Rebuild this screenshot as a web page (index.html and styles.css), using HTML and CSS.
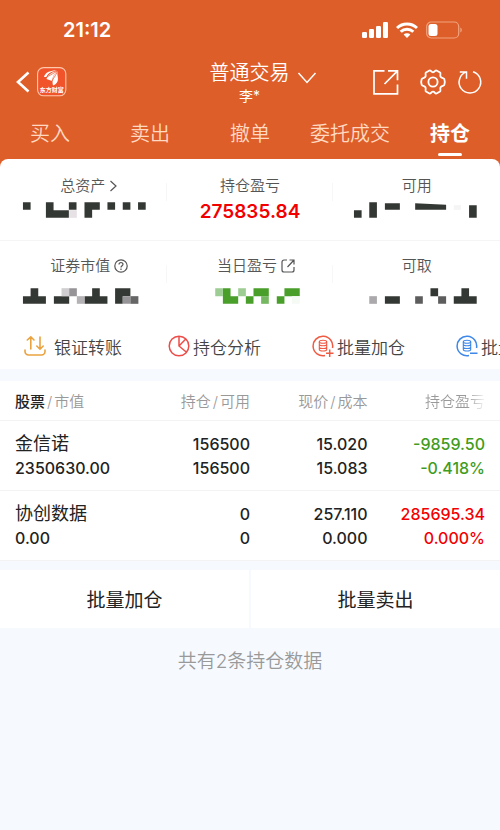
FILE: index.html
```html
<!DOCTYPE html>
<html lang="zh-CN">
<head>
<meta charset="utf-8">
<meta name="viewport" content="width=device-width, initial-scale=1">
<title>普通交易</title>
<link rel="stylesheet" href="styles.css">
</head>
<body>
<header class="top">
  <div class="status">
    <time class="clock">21:12</time>
    <div class="status-icons">
      <svg width="26" height="16" viewBox="0 0 26 16" fill="#fff" aria-hidden="true"><rect y="10" width="5" height="6" rx="1.2"/><rect x="7" y="7" width="5" height="9" rx="1.2"/><rect x="14" y="4" width="5" height="12" rx="1.2"/><rect x="21" y="0" width="5" height="16" rx="1.2"/></svg>
      <svg width="22" height="16" viewBox="0 0 22 16" fill="none" stroke="#fff" stroke-width="3" aria-hidden="true"><path d="M1 6a14.300 14.300 0 0 1 20 0"/><path d="M4.700 9.800a9 9 0 0 1 12.600 0"/><path d="M11 16 7.600 12.600a4.900 4.900 0 0 1 6.800 0z" fill="#fff" stroke="none"/></svg>
      <svg width="36" height="18" viewBox="0 0 36 18" fill="none" aria-hidden="true"><rect x=".7" y="1" width="32" height="16" rx="4.500" stroke="#f0a47f" stroke-width="1.200"/><rect x="2.500" y="3" width="9" height="12" rx="2.500" fill="#fff"/><path d="M34.300 6.500c2 .8 2 4.200 0 5z" fill="#f0a47f"/></svg>
    </div>
  </div>
  <div class="nav">
    <div class="nav-left">
      <button class="icon-btn" aria-label="返回"><svg width="14" height="22" viewBox="0 0 14 22" fill="none" stroke="#fff" stroke-width="2.600"><path d="M12.500 1.500 2 11l10.500 9.500"/></svg></button>
      <svg class="logo" width="30" height="30" viewBox="0 0 30 30" role="img" aria-label="东方财富"><rect x=".6" y=".6" width="28.200" height="28.200" rx="6" fill="#f1532b" stroke="#ffc9ad" stroke-width="1.100"/><path d="M7 10C8 5 14 3 20.500 3.500 15 4 11 6 9.500 10z M9.500 12C11 7.500 15 4.800 20.600 4.200 17.500 6.500 15.500 9.500 15 14z M16 18.500C14.500 12 17 7 20.800 4.500 19.500 8 22 11 20.500 14.500 19.500 17 17.500 18 16 18.500z" fill="#fff"/><path d="M9 10.500 20 4.300M15 14 20.700 4.500" stroke="#f1532b" stroke-width=".7"/><text x="14.700" y="25.200" text-anchor="middle" class="logo-text">东方财富</text></svg>
    </div>
    <button class="account">
      <span class="account-text"><span class="account-title">普通交易</span><span class="account-name">李*</span></span>
      <svg class="account-arrow" width="20" height="14" viewBox="0 0 20 14" fill="none" stroke="#fff" stroke-width="1.500"><path d="M1.500 2 10 11.500 18.500 2"/></svg>
    </button>
    <div class="nav-right">
      <button class="icon-btn" aria-label="分享"><svg width="28" height="28" viewBox="0 0 28 28" fill="none" stroke="#fff" stroke-width="1.700"><path d="M12.500 2.800H2v23h23.500V16.500M16 2.800h9.500v9.500M25.500 2.800 12.500 16"/></svg></button>
      <button class="icon-btn" aria-label="设置"><svg width="28" height="28" viewBox="0 0 28 28" fill="none" stroke="#fff" stroke-width="1.800" stroke-linejoin="round"><path d="M10.500 2.500C12 2 12 4.300 14 4.300S16 2 17.500 2.500L21 4.500C22.300 5.500 20.600 7 21.600 8.800S25 9.800 25.300 11.200C26 13 26 15 25.300 16.800 25 18.200 22.600 17.400 21.600 19.200S22.300 22.500 21 23.500L17.500 25.500C16 26 16 23.700 14 23.700S12 26 10.500 25.500L7 23.500C5.700 22.500 7.400 21 6.400 19.200S3 18.200 2.700 16.800C2 15 2 13 2.700 11.200 3 9.800 5.400 10.600 6.400 8.800S5.700 5.500 7 4.500Z"/><circle cx="14" cy="14" r="4.600"/></svg></button>
      <button class="icon-btn" aria-label="刷新"><svg width="26" height="26" viewBox="0 0 26 26" fill="none" stroke="#fff" stroke-width="1.500"><path d="M16 2.800A10.800 10.800 0 1 1 9.500 2.900M2.800 2.900h6.700v6.900"/></svg></button>
    </div>
  </div>
  <nav class="tabs">
    <a href="#buy">买入</a><a href="#sell">卖出</a><a href="#cancel">撤单</a><a href="#orders">委托成交</a><a class="active" href="#hold" aria-current="page">持仓</a>
  </nav>
</header>
<main>
  <section class="summary">
    <div class="cell">
      <div class="label with-icon">总资产<svg width="9" height="14" viewBox="0 0 9 14" fill="none" stroke="#555" stroke-width="1.200"><path d="M1.500 2 7 7 1.500 12"/></svg></div>
      <svg class="mosaic" viewBox="0 0 501 47" fill="#343834" aria-hidden="true"><path d="M69 0h23v23H69zM138 0h23v24h46V0h23v23h-23v24h-69zM254 0h46v23h-23v24h-23zM323 0h23v23h-23zM369 0h23v23h-23zM415 0h23v23h-23z"/><path d="M208 24h23v23h-23z" fill="#e6e1e5"/></svg>
    </div>
    <div class="cell">
      <div class="label">持仓盈亏</div>
      <div class="total">275835.84</div>
    </div>
    <div class="cell">
      <div class="label">可用</div>
      <svg class="mosaic" viewBox="0 0 501 47" fill="#343834" aria-hidden="true"><path d="M63 24h23v23H63zM109 0h23v47h-23zM156 3h45v20h-45zM247 3l93 5v15h-93zM409 9h23v38h-23z"/><path d="M363 9h22v14h-22z" fill="#f5f5f5"/></svg>
    </div>
    <div class="cell">
      <div class="label with-icon">证券市值<svg width="14" height="14" viewBox="0 0 14 14" fill="none" stroke="#555" stroke-width="1.200"><circle cx="7" cy="7" r="6.200"/><path d="M5 5.600C5 2.800 9 2.900 9 5.300 9 6.800 7 6.700 7 8.500M7 9.600v1.300"/></svg></div>
      <svg class="mosaic" viewBox="0 0 501 47" fill="#343834" aria-hidden="true"><path d="M92 0h23v24h23v23H69V24h23zM162 24h46v23h-46zM277 0h23v24h23v23h-69V24h23zM346 0h46v24h-23v23h-23z"/><path d="M185 0h23v24h-23z" fill="#d0ced0"/><path d="M208 0h23v24h-23zM369 24h23v23h-23z" fill="#969496"/><path d="M231 24h23v23h-23z" fill="#b5b2b5"/><path d="M392 24h24v23h-24z" fill="#666"/></svg>
    </div>
    <div class="cell">
      <div class="label with-icon">当日盈亏<svg width="14" height="14" viewBox="0 0 14 14" fill="none" stroke="#555" stroke-width="1.200"><path d="M6 1H3a2 2 0 0 0-2 2v8a2 2 0 0 0 2 2h8a2 2 0 0 0 2-2V8M8.500 1H13v4.500M13 1 6.500 8"/></svg></div>
      <svg class="mosaic" viewBox="0 0 501 47" fill="#499f2a" aria-hidden="true"><path d="M168 0h23v24h23v23h-46zM260 0h46v24h-46v23h-23V24h23zM353 0h46v24h-46v23h-23V24h23z"/><path d="M145 0h23v24h-23zM214 0h23v24h-23z" fill="#9dcd92"/><path d="M283 24h23v23h-23z" fill="#76b762"/><path d="M376 24h23v23h-23z" fill="#f5faf5"/></svg>
    </div>
    <div class="cell">
      <div class="label">可取</div>
      <svg class="mosaic" viewBox="0 0 501 47" fill="#343834" aria-hidden="true"><path d="M156 24h45v23h-45zM293 0h23v24h-23zM386 0h23v24h23v23h-69V24h23z"/><path d="M109 24h23v23h-23z" fill="#aba9ab"/><path d="M247 24h23v23h-23zM316 24h24v23h-24z" fill="#5c5d5c"/></svg>
    </div>
  </section>
  <section class="tools">
    <button class="tool wide"><svg width="22" height="22" viewBox="0 0 22 22" fill="none" stroke="#eaa23f" stroke-width="1.600" stroke-linecap="round"><path d="M1 15v1.500a3.500 3.500 0 0 0 3.500 3.500h13a3.500 3.500 0 0 0 3.500-3.500V15M6.800 14V2M3.300 5 6.800 1.800 10 5M16 2v12M12.800 11l3.200 3.200 3.200-3.200"/></svg>银证转账</button>
    <button class="tool"><svg width="22" height="22" viewBox="0 0 22 22" fill="none" stroke="#ed4c48" stroke-width="1.500"><circle cx="11" cy="11" r="9.800"/><path d="M11 1.200V11l7.500 6.300M11 11l6.800-7"/></svg>持仓分析</button>
    <button class="tool"><svg width="22" height="22" viewBox="0 0 22 22" fill="none" stroke="#ef5a43" stroke-width="1.500"><path d="M20.500 13A9.800 9.800 0 1 0 13 20.600M14 18.200h7.500M17.700 14.400v7.500"/><g stroke-width="1.100"><ellipse cx="11" cy="6.700" rx="3.700" ry="1.500"/><path d="M7.300 6.700v7.800c0 2 7.400 2 7.400 0V6.700M7.300 9.300c0 2 7.400 2 7.400 0M7.300 12c0 2 7.400 2 7.400 0"/></g></svg>批量加仓</button>
    <button class="tool"><svg width="22" height="22" viewBox="0 0 22 22" fill="none" stroke="#3d88e8" stroke-width="1.500"><path d="M20.500 13A9.800 9.800 0 1 0 13 20.600M14 18.200h7.500"/><g stroke-width="1.100"><ellipse cx="11" cy="6.700" rx="3.700" ry="1.500"/><path d="M7.300 6.700v7.800c0 2 7.400 2 7.400 0V6.700M7.300 9.300c0 2 7.400 2 7.400 0M7.300 12c0 2 7.400 2 7.400 0"/></g></svg>批量卖出</button>
  </section>
  <table class="holdings">
    <colgroup><col class="col-name"><col class="col-qty"><col class="col-price"><col></colgroup>
    <thead>
      <tr><th><b>股票</b><i>/</i>市值</th><th>持仓<i>/</i>可用</th><th>现价<i>/</i>成本</th><th class="fade">持仓盈亏</th></tr>
    </thead>
    <tbody>
      <tr><td><span class="name">金信诺</span>2350630.00</td><td>156500<br>156500</td><td>15.020<br>15.083</td><td class="down">-9859.50<br>-0.418%</td></tr>
      <tr><td><span class="name">协创数据</span>0.00</td><td>0<br>0</td><td>257.110<br>0.000</td><td class="up">285695.34<br>0.000%</td></tr>
    </tbody>
  </table>
  <div class="batch"><button>批量加仓</button><button>批量卖出</button></div>
  <p class="count">共有2条持仓数据</p>
</main>
</body>
</html>
```
FILE: styles.css
```css
* { box-sizing: border-box; }
body {
  margin: 0;
  background: #f6faff;
  color: #222;
  font-family: Inter, "Noto Sans CJK SC", sans-serif;
  overflow-x: hidden;
}
button {
  margin: 0;
  padding: 0;
  border: 0;
  background: none;
  color: inherit;
  font: inherit;
}
svg { display: block; flex: none; }

.top {
  background: #de5e29;
  color: #fff;
  padding-bottom: 12px;
}
.status {
  display: flex;
  justify-content: space-between;
  align-items: center;
  height: 60px;
  padding: 0 38px 0 63px;
}
.clock { font-size: 20px; font-weight: 600; }
.status-icons { display: flex; align-items: center; gap: 8px; }
.nav {
  display: grid;
  grid-template-columns: 1fr auto 1fr;
  align-items: center;
  height: 48px;
  padding: 0 17px 0 16px;
}
.nav-left { display: flex; align-items: center; gap: 7px; padding-bottom: 6px; }
.logo-text { font-family: "Noto Sans CJK SC", sans-serif; font-size: 6px; font-weight: 700; fill: #fff; }
.account { display: flex; align-items: flex-start; gap: 7px; padding: 0 0 4px 27px; }
.account-text { display: flex; flex-direction: column; align-items: center; }
.account-title { font-size: 20px; line-height: 26px; font-weight: 350; }
.account-name { font-size: 14px; line-height: 20px; }
.account-arrow { margin-top: 11px; }
.nav-right { display: flex; justify-content: flex-end; align-items: center; padding-bottom: 6px; }
.nav-right .icon-btn:first-child { margin-right: 19px; }
.nav-right .icon-btn:last-child { margin-left: 10px; }

.tabs {
  display: grid;
  grid-template-columns: repeat(5, 1fr);
  height: 51px;
}
.tabs a {
  display: flex;
  flex-direction: column;
  align-items: center;
  color: #ffd9c2;
  font-size: 20px;
  line-height: 52px;
  font-weight: 350;
  text-decoration: none;
}
.tabs .active { color: #fff; font-weight: 700; }
.tabs .active::after {
  content: "";
  flex: none;
  width: 24px;
  height: 3px;
  margin-top: -7px;
  border-radius: 2px;
  background: #fff;
}

.summary {
  display: grid;
  grid-template-columns: repeat(3, 1fr);
  margin-top: -12px;
  border-radius: 8px 8px 0 0;
  background: #fff;
}
.cell {
  position: relative;
  display: flex;
  flex-direction: column;
  align-items: center;
  gap: 11px;
  height: 82px;
  padding-top: 14px;
}
.cell:nth-child(-n+3) {
  gap: 5px;
  padding-top: 16px;
  border-bottom: 1px solid #f5f5f5;
}
.cell:not(:nth-child(3n))::after {
  content: "";
  position: absolute;
  top: 24px;
  right: 0;
  width: 1px;
  height: 18px;
  background: #f7f7f7;
}
.label {
  display: flex;
  align-items: center;
  gap: 4px;
  color: #555;
  font-size: 15px;
  line-height: 22px;
  font-weight: 350;
}
.with-icon { padding-left: 12px; }
.mosaic { width: 100%; height: 16px; }
.total { color: #f20000; font-size: 19px; line-height: 20px; font-weight: 600; }

.tools {
  display: flex;
  padding-left: 24px;
  overflow: hidden;
  background: #fff;
}
.tool {
  display: flex;
  flex: 0 0 144px;
  align-items: center;
  gap: 3px;
  height: 46px;
  color: #444;
  font-size: 17px;
  font-weight: 350;
  white-space: nowrap;
}
.tool.wide { gap: 8px; }

.holdings {
  width: 100%;
  margin-top: 12px;
  border-collapse: collapse;
  table-layout: fixed;
  background: #fff;
}
.col-name { width: 26%; }
.col-qty { width: 24%; }
.col-price { width: 23.5%; }
.holdings th {
  height: 39px;
  padding: 0;
  border-bottom: 1px solid #f3f3f3;
  color: #999;
  font-size: 15px;
  font-weight: 350;
  text-align: right;
  white-space: nowrap;
}
.holdings th b { color: #222; font-weight: 500; }
.holdings th i { margin: 0 2px; font-style: normal; }
.holdings .fade {
  color: transparent;
  background: linear-gradient(90deg, #999 75%, #fff 90%);
  background-clip: text;
}
.holdings td {
  height: 70px;
  padding: 2px 0 0;
  border-bottom: 1px solid #f3f3f3;
  font-size: 16px;
  line-height: 24px;
  font-weight: 500;
  text-align: right;
}
.holdings th:first-child, .holdings td:first-child { padding-left: 15px; text-align: left; }
.holdings th:last-child, .holdings td:last-child { padding-right: 15px; }
.name { display: block; font-size: 18px; font-weight: 400; }
.holdings .down { color: #3f9c20; }
.holdings .up { color: #f20000; }

.batch {
  display: grid;
  grid-template-columns: 1fr 1fr;
  gap: 2px;
  margin-top: 9px;
}
.batch button { height: 58px; background: #fff; font-size: 19px; }
.count {
  margin: 20px 0;
  color: #999;
  font-size: 19px;
  line-height: 28px;
  font-weight: 350;
  text-align: center;
}
```
